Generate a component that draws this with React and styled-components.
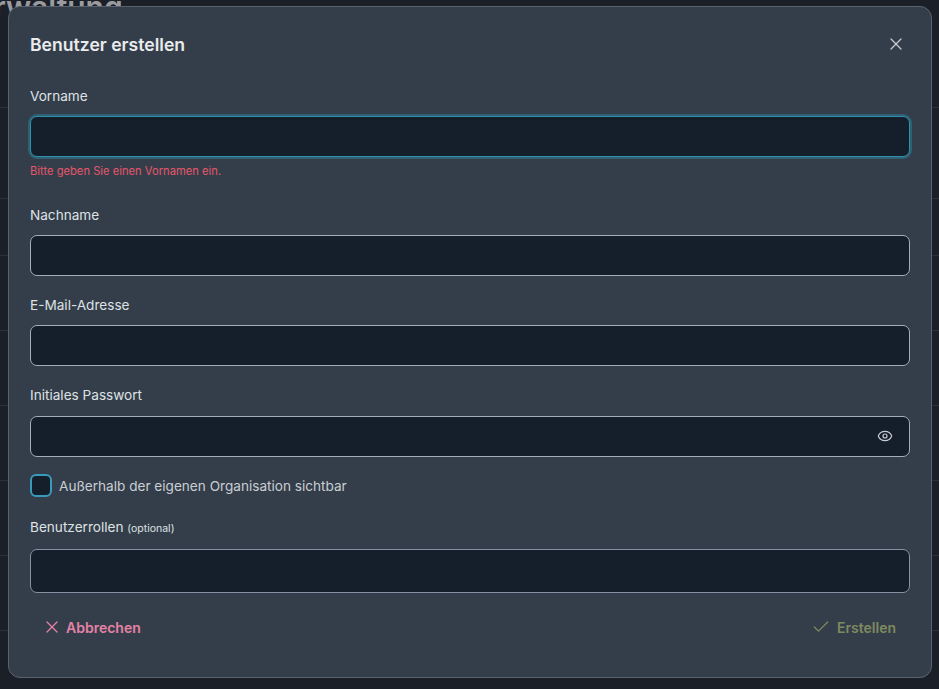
import React from "react";
import styled, { createGlobalStyle } from "styled-components";
import { X, Check, Eye } from "lucide-react";

const GlobalStyle = createGlobalStyle`
  html, body {
    margin: 0;
    height: 100%;
    background: #1a1f28;
    font-family: Inter, "Noto Sans", sans-serif;
  }
  * { box-sizing: border-box; }
`;

const Page = styled.div`
  position: relative;
  width: 939px;
  height: 689px;
  overflow: hidden;
  background: #1a1f28;
`;

const BackgroundTitle = styled.div`
  position: absolute;
  left: -44px;
  top: -11px;
  font-size: 30px;
  line-height: 36px;
  font-weight: 600;
  color: #9a9b9f;
`;

const BackgroundRows = styled.div`
  position: absolute;
  inset: 0;
  display: flex;
  flex-direction: column;
`;

const BackgroundRow = styled.div`
  flex: none;
  height: ${(p) => p.$height}px;
  border-bottom: 1px solid #2b303a;
`;

const Dialog = styled.div`
  position: absolute;
  left: 8px;
  top: 6px;
  width: 924px;
  height: 672px;
  background: #343e4a;
  border: 1px solid #5a626e;
  border-radius: 12px;
  padding: 21px 21px 0;
  display: flex;
  flex-direction: column;
`;

const Header = styled.div`
  height: 34px;
  display: flex;
  align-items: center;
  justify-content: space-between;
  margin-bottom: 24px;
`;

const Title = styled.h2`
  margin: 0;
  font-size: 17.6px;
  font-weight: 600;
  color: #e9ebed;
  position: relative;
  top: -1px;
`;

const CloseButton = styled.button`
  border: 0;
  background: none;
  padding: 0;
  display: flex;
  color: #c9cdd2;
  margin: -2px 4px 0 0;
`;

const Field = styled.div`
  display: flex;
  flex-direction: column;
  margin-bottom: ${(p) => p.$gap || 19}px;
`;

const Label = styled.label`
  font-size: 13.6px;
  line-height: 20px;
  color: #dfe2e5;
  margin-bottom: ${(p) => p.$gap || 10}px;
`;

const Hint = styled.span`
  font-size: 10.5px;
`;

const InputWrap = styled.div`
  position: relative;
  display: flex;
`;

const Input = styled.input`
  width: 100%;
  height: ${(p) => p.$height || 41}px;
  background: #151f2b;
  border-radius: 7px;
  outline: none;
  color: #fff;
  border: 1px solid ${(p) => (p.$focus ? "#3390ad" : p.$muted ? "#8791a3" : "#a3adbd")};
  box-shadow: ${(p) => (p.$focus ? "0 0 0 2px #2f6073" : "none")};
`;

const EyeIcon = styled.span`
  position: absolute;
  right: 17px;
  top: 12px;
  display: flex;
  color: #c9cdd2;
`;

const ErrorText = styled.div`
  font-size: 11.2px;
  line-height: 16px;
  color: #e5566b;
  margin-top: 6px;
`;

const CheckRow = styled.label`
  display: flex;
  align-items: center;
  gap: 7px;
  font-size: 13.6px;
  color: #c9ced4;
  margin: -2px 0 20px;
`;

const CheckBox = styled.span`
  width: 22px;
  height: 23px;
  border: 2px solid #3a9abb;
  border-radius: 6px;
  background: #151f2b;
`;

const Actions = styled.div`
  display: flex;
  justify-content: space-between;
  align-items: center;
  padding: 0 14px 0 12px;
  margin-top: 5px;
`;

const ActionButton = styled.button`
  border: 0;
  background: none;
  padding: 0;
  font: inherit;
  font-size: 14px;
  font-weight: 600;
  color: ${(p) => p.$color};
  display: flex;
  align-items: center;
  gap: ${(p) => p.$gap}px;
`;

const rowHeights = [108, 91, 57, 75, 75, 75, 75, 75];

export default function App() {
  return (
    <Page>
      <GlobalStyle />
      <BackgroundTitle>Verwaltung</BackgroundTitle>
      <BackgroundRows>
        {rowHeights.map((h, i) => (
          <BackgroundRow key={i} $height={h} />
        ))}
      </BackgroundRows>
      <Dialog>
        <Header>
          <Title>Benutzer erstellen</Title>
          <CloseButton>
            <X size={20} strokeWidth={1.5} />
          </CloseButton>
        </Header>
        <Field $gap={26}>
          <Label>Vorname</Label>
          <Input $focus />
          <ErrorText>Bitte geben Sie einen Vornamen ein.</ErrorText>
        </Field>
        <Field>
          <Label>Nachname</Label>
          <Input />
        </Field>
        <Field>
          <Label>E-Mail-Adresse</Label>
          <Input />
        </Field>
        <Field>
          <Label $gap={11}>Initiales Passwort</Label>
          <InputWrap>
            <Input />
            <EyeIcon>
              <Eye size={16} strokeWidth={1.8} />
            </EyeIcon>
          </InputWrap>
        </Field>
        <CheckRow>
          <CheckBox />
          Außerhalb der eigenen Organisation sichtbar
        </CheckRow>
        <Field>
          <Label>
            Benutzerrollen <Hint>(optional)</Hint>
          </Label>
          <Input $height={44} $muted />
        </Field>
        <Actions>
          <ActionButton $color="#e582a5" $gap={4}>
            <X size={20} strokeWidth={1.5} />
            Abbrechen
          </ActionButton>
          <ActionButton $color="#7e8a5f" $gap={6}>
            <Check size={20} strokeWidth={1.5} />
            Erstellen
          </ActionButton>
        </Actions>
      </Dialog>
    </Page>
  );
}
